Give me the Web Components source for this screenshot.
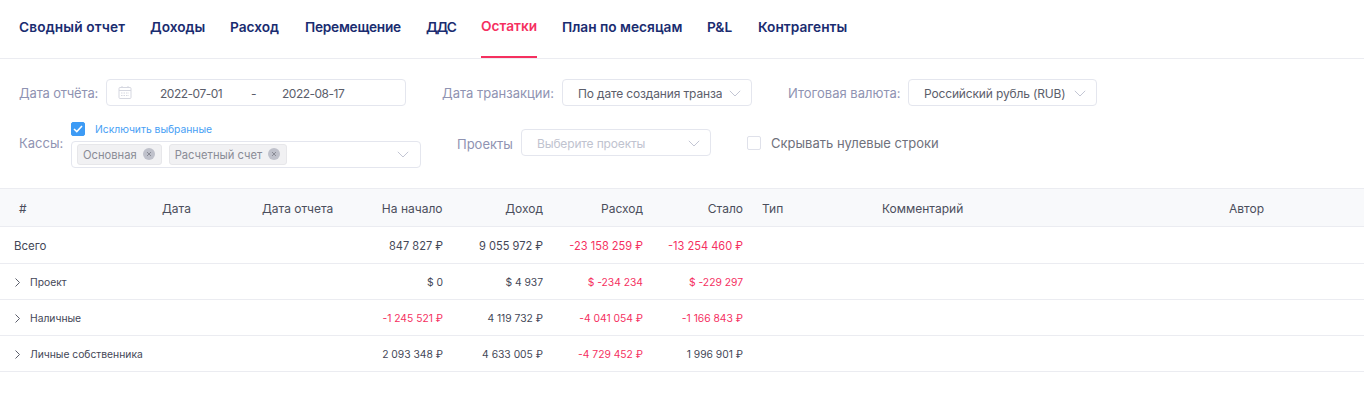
<!DOCTYPE html>
<html lang="ru"><head><meta charset="utf-8"><title>Остатки</title>
<style>
html,body{margin:0;background:#fff;font-family:Inter,"Noto Sans",sans-serif;color:#3d4152}
report-page{display:block;width:1364px;height:405px;overflow:hidden}
</style></head><body>
<report-page></report-page>
<script>
const chev='<svg width="12" height="7" viewBox="0 0 12 7" fill="none" stroke="#c3c6d4" stroke-width="1"><path d="M.8.8 6 6l5.2-5.2"/></svg>';
class NavTabs extends HTMLElement{constructor(){super();const s=this.attachShadow({mode:'open'});
const items=[['Сводный отчет',106,.15],['Доходы',55,0],['Расход',50,0],['Перемещение',96,-.25],['ДДС',30,-1.4],['Остатки',56,0],['План по месяцам',120,0],['P&L',26,0],['Контрагенты',90,0]];
s.innerHTML=`<style>:host{display:flex;gap:25px;height:58px;padding-left:19px;border-bottom:1px solid #ebecf1;font:600 13.7px/1 Inter,sans-serif;color:#1a2c70}
a{display:block;flex:none;box-sizing:border-box;height:58px;padding-top:21px;white-space:nowrap}
a.on{color:#f5305f;border-bottom:2px solid #f5305f;padding-top:20px}</style>`+items.map(([t,w,l])=>`<a class="${t==='Остатки'?'on':''}" style="width:${w}px;letter-spacing:${l}px">${t.replace('&','&amp;')}</a>`).join('');}}
customElements.define('nav-tabs',NavTabs);

class FieldLabel extends HTMLElement{constructor(){super();this.attachShadow({mode:'open'}).innerHTML=`<style>:host{display:block;font:13px/20px Inter,sans-serif;color:#8f93b2;white-space:nowrap}</style><slot></slot>`;}}
customElements.define('field-label',FieldLabel);

class SelectBox extends HTMLElement{constructor(){super();this.attachShadow({mode:'open'}).innerHTML=`<style>:host{display:flex;align-items:center;box-sizing:border-box;height:27px;border:1px solid #e4e6ee;border-radius:4px;background:#fff;font:12px/1 Inter,sans-serif;letter-spacing:-.15px;color:#5b5e6b;padding:2px 10px 0 15px;white-space:nowrap}
.t{flex:1;overflow:hidden;min-width:0;line-height:16px}:host([placeholder]){color:#c0c3cf}svg{flex:none;margin-left:7px}</style><span class="t"><slot></slot></span>${chev}`;}}
customElements.define('select-box',SelectBox);

class DateRange extends HTMLElement{constructor(){super();this.attachShadow({mode:'open'}).innerHTML=`<style>:host{display:flex;align-items:center;box-sizing:border-box;width:300px;height:27px;border:1px solid #e4e6ee;border-radius:4px;font:12px/1 Inter,sans-serif;letter-spacing:-.5px;color:#5b5e6b;padding:0 0 0 11px;white-space:nowrap}
svg{flex:none}span{padding-top:2px}.a{margin-left:28px;width:91px}.d{width:31px}</style>
<svg width="14" height="13" viewBox="0 0 14 13" fill="none" stroke="#d5d7e0"><rect x="1" y="1.500" width="12" height="11" rx="1"/><path d="M1 4.500h12M4 0v2M10 0v2"/><path d="M3 7h8M3 9.500h8" stroke-dasharray="1.500 1"/></svg>
<span class="a">2022-07-01</span><span class="d">-</span><span class="b">2022-08-17</span>`;}}
customElements.define('date-range',DateRange);

class CheckMark extends HTMLElement{constructor(){super();this.attachShadow({mode:'open'}).innerHTML=`<style>:host{display:flex;align-items:center;justify-content:center;box-sizing:border-box;width:14px;height:14px;border:1px solid #dfe1ea;border-radius:2px;background:#fff;flex:none}
:host([checked]){background:#3d9bf5;border-color:#3d9bf5}svg{display:none}:host([checked]) svg{display:block}</style><svg width="10" height="8" viewBox="0 0 10 8" fill="none" stroke="#fff" stroke-width="1.500"><path d="M1 4l2.800 2.600L9 1"/></svg>`;}}
customElements.define('check-mark',CheckMark);

class TagChip extends HTMLElement{constructor(){super();this.attachShadow({mode:'open'}).innerHTML=`<style>:host{display:flex;align-items:center;box-sizing:border-box;height:21px;padding:2px 6px 0 5px;background:#f1f1f3;border:1px solid #e7e7ea;border-radius:3px;font:11.2px/1 Inter,sans-serif;color:#8a8c96;white-space:nowrap}
svg{margin:-4px 0 0 6px;flex:none}</style><slot></slot><svg width="12" height="12" viewBox="0 0 12 12"><circle cx="6" cy="6" r="6" fill="#bfc1cb"/><path d="M4 4l4 4M8 4l-4 4" stroke="#8a8c96" stroke-width="1"/></svg>`;}}
customElements.define('tag-chip',TagChip);

class FilterPanel extends HTMLElement{constructor(){super();this.attachShadow({mode:'open'}).innerHTML=`<style>:host{display:block;box-sizing:border-box;height:130px;padding:20px 0 0 19px;border-bottom:1px solid #ebecf1}
.r{display:flex;align-items:center}.r1{height:27px}.r2{margin-top:14px;height:45px}
.l{margin-right:8px}.kassy{display:flex;flex-direction:column;width:350px;height:48px;align-self:flex-start}
.ex{display:flex;align-items:flex-start;gap:10px;height:19px;padding-top:2px;font:10.3px/15px Inter,sans-serif;color:#47a0f5;white-space:nowrap}
.ms{display:flex;align-items:center;gap:7px;box-sizing:border-box;height:27px;border:1px solid #e4e6ee;border-radius:4px;padding:0 11px 0 5px}
.ms svg{margin-left:auto}.sk{display:flex;align-items:center;gap:10px;font:13px/1 Inter,sans-serif;color:#6f717c;white-space:nowrap}.sk span{padding-top:2px}.up{padding-top:2px}</style>
<div class="r r1"><field-label class="l" style="width:79px;letter-spacing:-.15px">Дата отчёта:</field-label><date-range></date-range>
<field-label class="l" style="margin-left:36px;width:112px">Дата транзакции:</field-label><select-box style="width:190px">По дате создания транзакции</select-box>
<field-label class="l" style="margin-left:36px;width:112px">Итоговая валюта:</field-label><select-box style="width:189px">Российский рубль (RUB)</select-box></div>
<div class="r r2"><field-label class="l" style="width:44px">Кассы:</field-label><div class="kassy"><div class="ex"><check-mark checked></check-mark>Исключить выбранные</div>
<div class="ms"><tag-chip>Основная</tag-chip><tag-chip>Расчетный счет</tag-chip>${chev}</div></div>
<field-label class="l up" style="margin-left:36px;width:56px">Проекты</field-label><select-box placeholder style="width:190px">Выберите проекты</select-box>
<div class="sk" style="margin-left:36px"><check-mark></check-mark><span>Скрывать нулевые строки</span></div></div>`;}}
customElements.define('filter-panel',FilterPanel);

const GRID='grid-template-columns:150px 100px 100px 100px 100px 100px 100px 120px 347px 147px';
class DataRow extends HTMLElement{constructor(){super();this.attachShadow({mode:'open'});}
connectedCallback(){const c=JSON.parse(this.getAttribute('cells'));const tot=this.hasAttribute('total'),exp=this.hasAttribute('expandable');
const h=+this.getAttribute('h');
const num=c.slice(1).map(v=>`<div class="n ${String(v).includes('-')?'neg':''}">${v}</div>`).join('');
this.shadowRoot.innerHTML=`<style>:host{display:grid;${GRID};box-sizing:border-box;height:${h}px;padding-top:${tot?3:2}px;border-bottom:1px solid #ebecf1;align-items:center;font:${tot?11.5:10.3}px/1 Inter,sans-serif;color:#444757;white-space:nowrap}
.n{text-align:right;padding-right:7px;font-size:${tot?11.05:10.3}px}.neg{color:#f5305f}.f{grid-column:1/4;display:flex;align-items:center;padding-left:${tot?14:15}px}svg{margin-right:10px;flex:none}</style>
<div class="f">${exp?'<svg width="5" height="9" viewBox="0 0 5 9" fill="none" stroke="#5b5e6b"><path d="M.5.500l4 4-4 4"/></svg>':''}${c[0]}</div>${num}`;}}
customElements.define('data-row',DataRow);

class HeadRow extends HTMLElement{constructor(){super();const H=[['#',19,'l'],['Дата',12,'l'],['Дата отчета',12,'l'],['На начало',0,'r w'],['Доход',0,'r'],['Расход',0,'r'],['Стало',0,'r'],['Тип',12,'l'],['Комментарий',12,'l'],['Автор',12,'l']];
this.attachShadow({mode:'open'}).innerHTML=`<style>:host{display:grid;${GRID};box-sizing:border-box;height:38px;padding-top:2px;background:#f8f9fb;border-bottom:1px solid #ebecf1;align-items:center;font:12px/1 Inter,sans-serif;color:#4b4e5c;white-space:nowrap}.r{text-align:right;padding-right:7px}.w{padding-right:7.500px}</style>`+H.map(([t,p,k])=>`<div class="${k}" style="padding-left:${p}px">${t}</div>`).join('');}}
customElements.define('head-row',HeadRow);

class ReportPage extends HTMLElement{constructor(){super();
const rows=[[37,1,['Всего','847 827 ₽','9 055 972 ₽','-23 158 259 ₽','-13 254 460 ₽']],[36,0,['Проект','$ 0','$ 4 937','$ -234 234','$ -229 297']],[36,0,['Наличные','-1 245 521 ₽','4 119 732 ₽','-4 041 054 ₽','-1 166 843 ₽']],[36,0,['Личные собственника','2 093 348 ₽','4 633 005 ₽','-4 729 452 ₽','1 996 901 ₽']]];
const s=this.attachShadow({mode:'open'});
s.innerHTML=`<style>:host{display:block}</style><nav-tabs></nav-tabs><filter-panel></filter-panel><head-row></head-row>`;
rows.forEach(([h,t,c])=>{const r=document.createElement('data-row');r.setAttribute('h',h);r.setAttribute('cells',JSON.stringify(c));if(t)r.setAttribute('total','');else r.setAttribute('expandable','');s.appendChild(r);});}}
customElements.define('report-page',ReportPage);
</script></body></html>
